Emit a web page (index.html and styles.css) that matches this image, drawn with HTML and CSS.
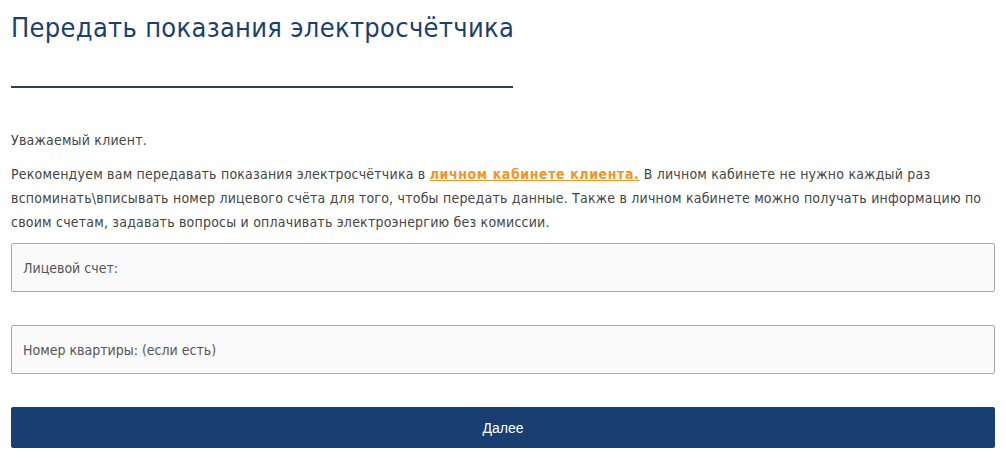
FILE: index.html
```html
<!DOCTYPE html>
<html lang="ru">
<head>
<meta charset="utf-8">
<title>Передать показания электросчётчика</title>
<link rel="stylesheet" href="styles.css">
</head>
<body>
<main class="page">
  <h1 class="title">Передать показания электросчётчика</h1>
  <div class="title-rule"></div>
  <p class="greeting">Уважаемый клиент.</p>
  <p class="intro">Рекомендуем вам передавать показания электросчётчика в <a class="cabinet-link" href="#">личном кабинете клиента.</a> В личном кабинете не нужно каждый раз вспоминать\вписывать номер лицевого счёта для того, чтобы передать данные. Также в личном кабинете можно получать информацию по своим счетам, задавать вопросы и оплачивать электроэнергию без комиссии.</p>
  <form class="meter-form">
    <input class="field" type="text" placeholder="Лицевой счет:">
    <input class="field" type="text" placeholder="Номер квартиры: (если есть)">
    <button class="submit" type="button">Далее</button>
  </form>
</main>
</body>
</html>
```

FILE: styles.css
```css
html, body {
  margin: 0;
  padding: 0;
  background: #ffffff;
}

.page {
  padding: 0 11px;
  font-family: "DejaVu Sans Condensed", "DejaVu Sans", sans-serif;
  color: #454545;
}

.title {
  margin: 12px 0 0;
  font-size: 27px;
  line-height: 31px;
  letter-spacing: 0.3px;
  font-weight: normal;
  color: #1b3f6e;
}

.title-rule {
  width: 502px;
  height: 2px;
  margin-top: 43px;
  background: #223f66;
}

.greeting {
  margin: 40px 0 0;
  font-size: 14px;
  line-height: 24px;
  letter-spacing: 0.21px;
}

.intro {
  margin: 10px 0 0;
  font-size: 14px;
  line-height: 24px;
  letter-spacing: 0.21px;
}

.cabinet-link {
  color: #f39423;
  font-weight: bold;
  letter-spacing: 0.6px;
  text-decoration: underline;
}

.meter-form {
  display: flex;
  flex-direction: column;
  gap: 33px;
  margin-top: 9px;
}

.field {
  box-sizing: border-box;
  height: 49px;
  width: 100%;
  margin: 0;
  padding: 0 11px;
  border: 1px solid #a9a9a9;
  border-radius: 2px;
  background: #fafafa;
  font-family: "DejaVu Sans Condensed", "DejaVu Sans", sans-serif;
  font-size: 14px;
  color: #333;
}

.field::placeholder {
  color: #555555;
  opacity: 1;
}

.submit {
  height: 41px;
  width: 100%;
  margin: 0;
  border: none;
  border-radius: 2px;
  background: #183e72;
  color: #ffffff;
  font-family: "Liberation Sans", Arial, sans-serif;
  font-size: 14px;
  cursor: pointer;
}
```
